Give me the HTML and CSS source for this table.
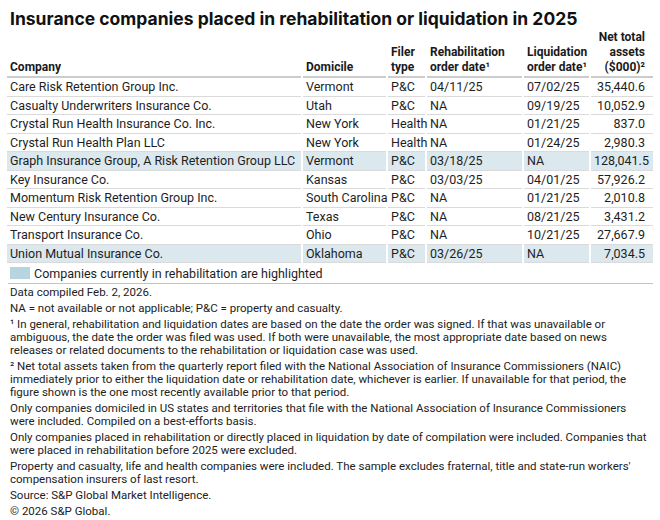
FILE: index.html
```html
<!DOCTYPE html>
<html>
<head>
<meta charset="utf-8">
<link rel="stylesheet" href="styles.css">
</head>
<body>
<div class="page">
  <h1 class="title">Insurance companies placed in rehabilitation or liquidation in 2025</h1>
  <table class="data">
    <colgroup>
      <col class="w-company"><col class="w-dom"><col class="w-type"><col class="w-rehab"><col class="w-liq"><col class="w-num">
    </colgroup>
    <thead>
      <tr>
        <th>Company</th>
        <th>Domicile</th>
        <th>Filer<br>type</th>
        <th>Rehabilitation<br>order date¹</th>
        <th>Liquidation<br>order date¹</th>
        <th class="num">Net total<br>assets<br>($000)²</th>
      </tr>
    </thead>
    <tbody>
      <tr><td>Care Risk Retention Group Inc.</td><td>Vermont</td><td>P&amp;C</td><td>04/11/25</td><td>07/02/25</td><td class="num">35,440.6</td></tr>
      <tr><td>Casualty Underwriters Insurance Co.</td><td>Utah</td><td>P&amp;C</td><td>NA</td><td>09/19/25</td><td class="num">10,052.9</td></tr>
      <tr><td>Crystal Run Health Insurance Co. Inc.</td><td>New York</td><td>Health</td><td>NA</td><td>01/21/25</td><td class="num">837.0</td></tr>
      <tr><td>Crystal Run Health Plan LLC</td><td>New York</td><td>Health</td><td>NA</td><td>01/24/25</td><td class="num">2,980.3</td></tr>
      <tr class="hl"><td>Graph Insurance Group, A Risk Retention Group LLC</td><td>Vermont</td><td>P&amp;C</td><td>03/18/25</td><td>NA</td><td class="num">128,041.5</td></tr>
      <tr><td>Key Insurance Co.</td><td>Kansas</td><td>P&amp;C</td><td>03/03/25</td><td>04/01/25</td><td class="num">57,926.2</td></tr>
      <tr><td>Momentum Risk Retention Group Inc.</td><td>South Carolina</td><td>P&amp;C</td><td>NA</td><td>01/21/25</td><td class="num">2,010.8</td></tr>
      <tr><td>New Century Insurance Co.</td><td>Texas</td><td>P&amp;C</td><td>NA</td><td>08/21/25</td><td class="num">3,431.2</td></tr>
      <tr><td>Transport Insurance Co.</td><td>Ohio</td><td>P&amp;C</td><td>NA</td><td>10/21/25</td><td class="num">27,667.9</td></tr>
      <tr class="hl"><td>Union Mutual Insurance Co.</td><td>Oklahoma</td><td>P&amp;C</td><td>03/26/25</td><td>NA</td><td class="num">7,034.5</td></tr>
    </tbody>
  </table>
  <div class="legend"><span class="swatch"></span>Companies currently in rehabilitation are highlighted</div>
  <div class="notes">
    <p>Data compiled Feb. 2, 2026.</p>
    <p>NA = not available or not applicable; P&amp;C = property and casualty.</p>
    <p>¹ In general, rehabilitation and liquidation dates are based on the date the order was signed. If that was unavailable or ambiguous, the date the order was filed was used. If both were unavailable, the most appropriate date based on news releases or related documents to the rehabilitation or liquidation case was used.</p>
    <p>² Net total assets taken from the quarterly report filed with the National Association of Insurance Commissioners (NAIC) immediately prior to either the liquidation date or rehabilitation date, whichever is earlier. If unavailable for that period, the figure shown is the one most recently available prior to that period.</p>
    <p>Only companies domiciled in US states and territories that file with the National Association of Insurance Commissioners were included. Compiled on a best-efforts basis.</p>
    <p>Only companies placed in rehabilitation or directly placed in liquidation by date of compilation were included. Companies that were placed in rehabilitation before 2025 were excluded.</p>
    <p>Property and casualty, life and health companies were included. The sample excludes fraternal, title and state-run workers' compensation insurers of last resort.</p>
    <p>Source: S&amp;P Global Market Intelligence.</p>
    <p>© 2026 S&amp;P Global.</p>
  </div>
</div>
</body>
</html>
```

FILE: styles.css
```css
* { box-sizing: border-box; }
html, body { margin: 0; padding: 0; background: #fff; }
body {
  font-family: "Roboto", "Liberation Sans", sans-serif;
  color: #1e1e1e;
}
.page {
  width: 660px;
  padding: 7px 0 0 8px;
}
.title {
  margin: 0 0 0 2px;
  font-family: "Inter", "Liberation Sans", sans-serif;
  font-size: 17.5px;
  font-weight: 700;
  line-height: 23px;
  color: #111;
}
.data {
  width: 650px;
  table-layout: fixed;
  border-collapse: separate;
  border-spacing: 2px 0;
  margin: 0 0 0 -3px;
  font-size: 12.5px;
}
.w-company { width: 294px; }
.w-dom { width: 83px; }
.w-type { width: 37px; }
.w-rehab { width: 95px; }
.w-liq { width: 65px; }
.w-num { width: 62px; }
.data th {
  font-weight: 700;
  font-size: 12px;
  line-height: 15px;
  text-align: left;
  vertical-align: bottom;
  padding: 0 0 1px 3px;
  border-bottom: 2px solid #cccccc;
  white-space: nowrap;
  color: #1a1a1a;
}
.data th.num, .data td.num { text-align: right; padding-right: 8px; }
.data td {
  height: 18.5px;
  padding: 0 0 0 3px;
  line-height: 17px;
  border-bottom: 1px solid #dadada;
  white-space: nowrap;
  overflow: visible;
}
.data tr.hl td { background: #dbe8ee; }
.legend {
  display: flex;
  align-items: center;
  gap: 4px;
  height: 21px;
  width: 645px;
  font-size: 12.5px;
  padding-left: 2px;
  border-bottom: 1px solid #c4c4c4;
}
.swatch {
  width: 20px;
  height: 12px;
  background: #b6d5df;
}
.notes {
  padding-left: 2px;
  width: 641px;
  font-size: 11.5px;
  line-height: 13px;
  color: #222;
}
.notes p { margin: 3px 0 0 0; }
.notes p:first-child { margin-top: 2px; }
```
